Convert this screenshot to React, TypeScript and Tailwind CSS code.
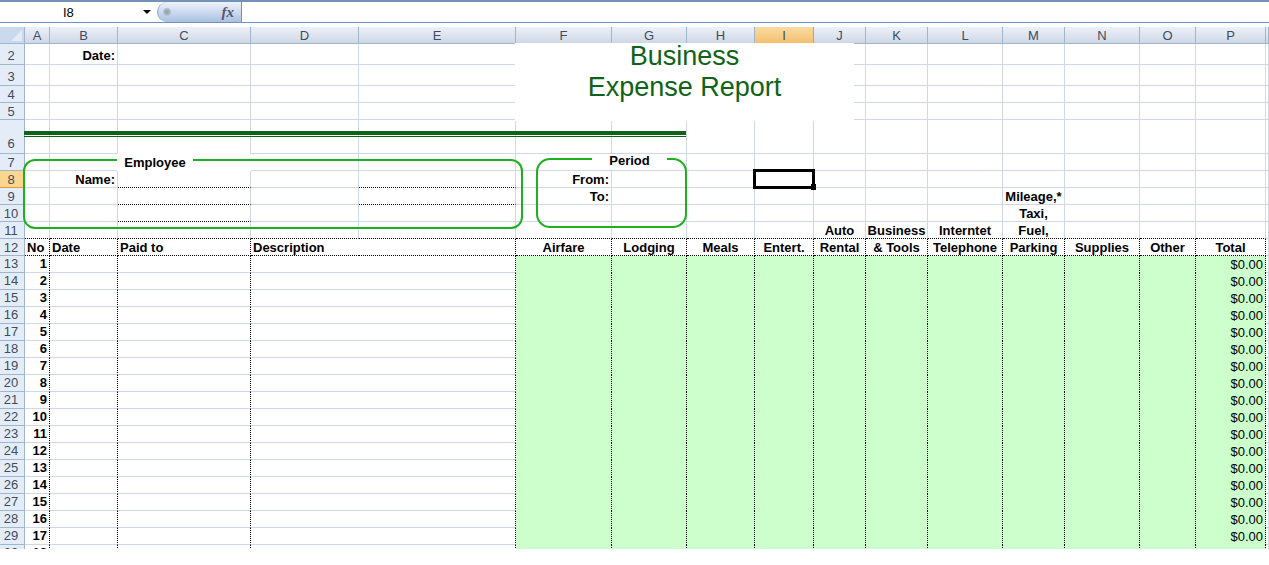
const colNames = ["A", "B", "C", "D", "E", "F", "G", "H", "I", "J", "K", "L", "M", "N", "O", "P", ""];
const rowNums = [2, 3, 4, 5, 6, 7, 8, 9, 10, 11, 12, 13, 14, 15, 16, 17, 18, 19, 20, 21, 22, 23, 24, 25, 26, 27, 28, 29, 30];

const labels: Record<string, string> = {
  "2-B": "Date:", "8-B": "Name:", "8-F": "From:", "9-F": "To:",
  "9-M": "Mileage,*", "10-M": "Taxi,", "11-M": "Fuel,", "11-J": "Auto", "11-K": "Business", "11-L": "Interntet",
  "12-A": "No", "12-B": "Date", "12-C": "Paid to", "12-D": "Description",
  "12-F": "Airfare", "12-G": "Lodging", "12-H": "Meals", "12-I": "Entert.", "12-J": "Rental", "12-K": "& Tools",
  "12-L": "Telephone", "12-M": "Parking", "12-N": "Supplies", "12-O": "Other", "12-P": "Total",
};

function lead(r: number) {
  if (r === 2 || r === 3 || r >= 13) return "leading-[16px]";
  if (r === 6) return "leading-[18px]";
  return "leading-[14px]";
}

function align(r: number, c: string) {
  if (r === 12 && ["A", "B", "C", "D"].includes(c)) return "justify-start pl-[2px]";
  if (["2-B", "8-B", "8-F", "9-F"].includes(`${r}-${c}`)) return "justify-end pr-[2px]";
  return "justify-center";
}

function rightBorder(r: number, c: string) {
  if ((r === 7 && (c === "B" || c === "C")) || (r >= 12 && c === "D")) return "";
  if (r >= 12 && c !== "") return "border-r border-r-black [border-right-style:dotted]";
  return "border-r border-r-[#d0d7e5]";
}

function bottomBorder(r: number, c: string, green: boolean) {
  if ((r === 6 || r === 7) && c === "C") return "";
  if (green && r >= 13) return "";
  const dotted =
    (c !== "" && (r === 11 || r === 12)) ||
    ((r === 8 || r === 9) && (c === "C" || c === "E")) ||
    (r === 10 && c === "C");
  return dotted ? "border-b border-b-black [border-bottom-style:dotted]" : "border-b border-b-[#d0d7e5]";
}

function Cell({ r, c }: { r: number; c: string }) {
  const green = r >= 13 && c !== "" && "FGHIJKLMNOP".includes(c);
  let text = labels[`${r}-${c}`] ?? "";
  let weight = "font-bold text-[13px]";
  let just = align(r, c);
  if (r >= 13 && c === "A") {
    text = String(r - 12);
    just = "justify-end pr-[2px]";
  }
  if (r >= 13 && c === "P") {
    text = "$0.00";
    weight = "font-normal text-[13px]";
    just = "justify-end pr-[2px]";
  }
  return (
    <div
      className={[
        "flex items-end whitespace-nowrap text-black",
        lead(r),
        just,
        weight,
        green ? "bg-[#ccffcc]" : "bg-white",
        rightBorder(r, c),
        bottomBorder(r, c, green),
      ].join(" ")}
    >
      {text}
    </div>
  );
}

export default function App() {
  return (
    <div className="h-[565px] w-[1269px] overflow-hidden bg-white font-['Liberation_Sans',Arial,sans-serif]">
      {/* formula bar */}
      <div className="flex h-[23px] items-stretch border-t-2 border-b border-t-[#7392b8] border-b-[#7392b8] bg-white">
        <div className="flex w-[157px] items-center justify-between pl-[63px] pr-[6px] text-[13px] leading-none text-black">
          <span>I8</span>
          <span className="h-0 w-0 border-x-[4px] border-t-[4px] border-x-transparent border-t-black" />
        </div>
        <div className="flex w-[85px] items-center justify-between rounded-l-[11px] border-r border-l border-r-[#7392b8] border-l-[#8aa6c9] bg-gradient-to-b from-[#eef3fa] via-[#ccdaee] to-[#a9c1e0] pl-[5px] pr-[7px]">
          <span className="h-[8px] w-[8px] rounded-full bg-radial from-[#8f9aa3] to-[#c8d6e8]" />
          <span className="font-['Liberation_Serif',serif] text-[15px] font-bold italic leading-none text-[#5a5570]">fx</span>
        </div>
      </div>
      <div className="h-[4px] bg-white" />

      {/* sheet */}
      <div className="relative h-[522px] w-[1269px] overflow-hidden">
        <div className="grid grid-cols-[25px_25px_68px_133px_108px_157px_96px_75px_68px_59px_52px_62px_75px_62px_75px_56px_70px_3px] grid-rows-[17px_21px_21px_17px_17px_34px_repeat(24,17px)]">
          <div className="flex items-end justify-end border-r border-b border-r-[#9eb6ce] border-b-[#9eb6ce] bg-[#c9d9ee] p-[2px]">
            <span className="h-0 w-0 border-b-[11px] border-l-[11px] border-b-[#e6ebf3] border-l-transparent" />
          </div>
          {colNames.map((n) => (
            <div
              key={n || "Q"}
              className={
                n === "I"
                  ? "flex items-center justify-center border-r border-b border-[#f29536] bg-gradient-to-b from-[#f9dba2] to-[#f4c06c] text-[13px] leading-none text-[#3e4c5e]"
                  : "flex items-center justify-center border-r border-b border-r-[#9eb6ce] border-b-[#9eb6ce] bg-gradient-to-b from-[#edf1f8] to-[#cfd8e6] text-[13px] leading-none text-[#3e4c5e]"
              }
            >
              {n}
            </div>
          ))}
          {rowNums.flatMap((r) => [
            <div
              key={`h${r}`}
              className={[
                "flex items-end justify-center border-r border-b pr-[2px] text-[13px] text-[#3e4c5e]",
                lead(r),
                r === 8 ? "border-[#f29536] bg-[#fbd68f]" : "border-r-[#9eb6ce] border-b-[#9eb6ce] bg-[#e4ecf7]",
              ].join(" ")}
            >
              {r}
            </div>,
            ...colNames.map((c) => <Cell key={`${r}-${c}`} r={r} c={c} />),
          ])}
        </div>

        {/* title block */}
        <div className="absolute left-[515px] top-[16px] flex h-[78px] w-[339px] flex-col items-center bg-white text-[27px] leading-[31px] text-[#0f6318]">
          <span className="-mt-[2px]">Business</span>
          <span>Expense Report</span>
        </div>
        {/* double rule */}
        <div className="absolute left-[24px] top-[104px] h-[6px] w-[662px] border-t-4 border-b border-t-[#0f6318] border-b-[#0f6318]" />

        {/* employee box */}
        <div className="pointer-events-none absolute left-[23px] top-[132px] h-[70px] w-[500px] rounded-[12px] border-2 border-[#1eb01e]" />
        <div className="absolute left-[117px] top-[127px] flex h-[17px] w-[76px] items-center justify-center bg-white text-[13px] font-bold text-black">
          Employee
        </div>
        {/* period box */}
        <div className="pointer-events-none absolute left-[536px] top-[131px] h-[70px] w-[151px] rounded-[14px] border-2 border-[#1eb01e]" />
        <div className="absolute left-[592px] top-[127px] flex h-[16px] w-[75px] items-center justify-center bg-white pb-[2px] text-[13px] font-bold text-black">
          Period
        </div>

        {/* selected cell */}
        <div className="absolute left-[753px] top-[142px] h-[20px] w-[62px] border-[3px] border-black" />
        <div className="absolute left-[811px] top-[157px] h-[6px] w-[5px] bg-black" />
      </div>
    </div>
  );
}
